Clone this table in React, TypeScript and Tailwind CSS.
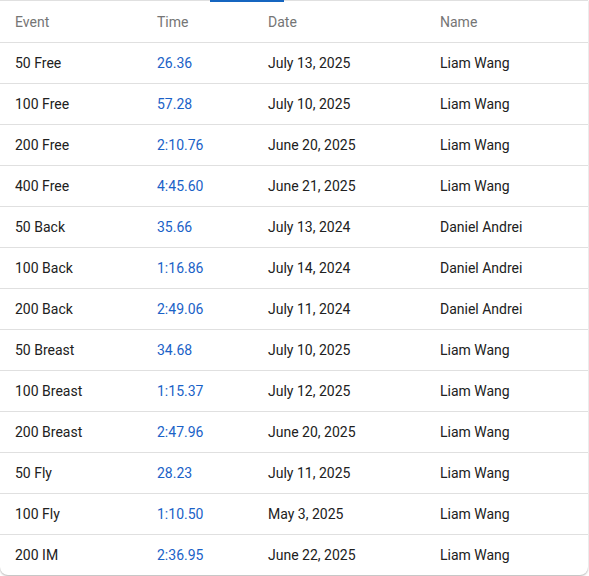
const records = [
  { event: "50 Free", time: "26.36", date: "July 13, 2025", name: "Liam Wang" },
  { event: "100 Free", time: "57.28", date: "July 10, 2025", name: "Liam Wang" },
  { event: "200 Free", time: "2:10.76", date: "June 20, 2025", name: "Liam Wang" },
  { event: "400 Free", time: "4:45.60", date: "June 21, 2025", name: "Liam Wang" },
  { event: "50 Back", time: "35.66", date: "July 13, 2024", name: "Daniel Andrei" },
  { event: "100 Back", time: "1:16.86", date: "July 14, 2024", name: "Daniel Andrei" },
  { event: "200 Back", time: "2:49.06", date: "July 11, 2024", name: "Daniel Andrei" },
  { event: "50 Breast", time: "34.68", date: "July 10, 2025", name: "Liam Wang" },
  { event: "100 Breast", time: "1:15.37", date: "July 12, 2025", name: "Liam Wang" },
  { event: "200 Breast", time: "2:47.96", date: "June 20, 2025", name: "Liam Wang" },
  { event: "50 Fly", time: "28.23", date: "July 11, 2025", name: "Liam Wang" },
  { event: "100 Fly", time: "1:10.50", date: "May 3, 2025", name: "Liam Wang" },
  { event: "200 IM", time: "2:36.95", date: "June 22, 2025", name: "Liam Wang" },
]

const cols = "grid grid-cols-[142px_111px_172px_1fr] items-center pl-[15px]"

export default function App() {
  return (
    <div className="w-[589px] h-[576px] bg-white overflow-hidden font-['Roboto','Liberation_Sans',sans-serif] text-sm">
      <div className="w-[588px] bg-white rounded-b-lg shadow-[0_1px_2px_rgba(0,0,0,0.3)] overflow-hidden">
        {/* tab strip bottom edge */}
        <div className="relative h-[2px]">
          <div className="h-px bg-[#e0e0e0]" />
          <div className="absolute left-[210px] top-0 w-[74px] h-[2px] bg-[#1565c0]" />
        </div>

        <div className={`${cols} h-[41px] border-b border-[#e0e0e0] text-[#757575]`}>
          <span>Event</span>
          <span>Time</span>
          <span>Date</span>
          <span>Name</span>
        </div>

        {records.map((r) => (
          <div
            key={r.event}
            className={`${cols} h-[41px] last:h-10 border-b last:border-b-0 border-[#e0e0e0] text-[#212121]`}
          >
            <span>{r.event}</span>
            <span className="text-[#1a62c7]">{r.time}</span>
            <span>{r.date}</span>
            <span>{r.name}</span>
          </div>
        ))}
      </div>
    </div>
  )
}
